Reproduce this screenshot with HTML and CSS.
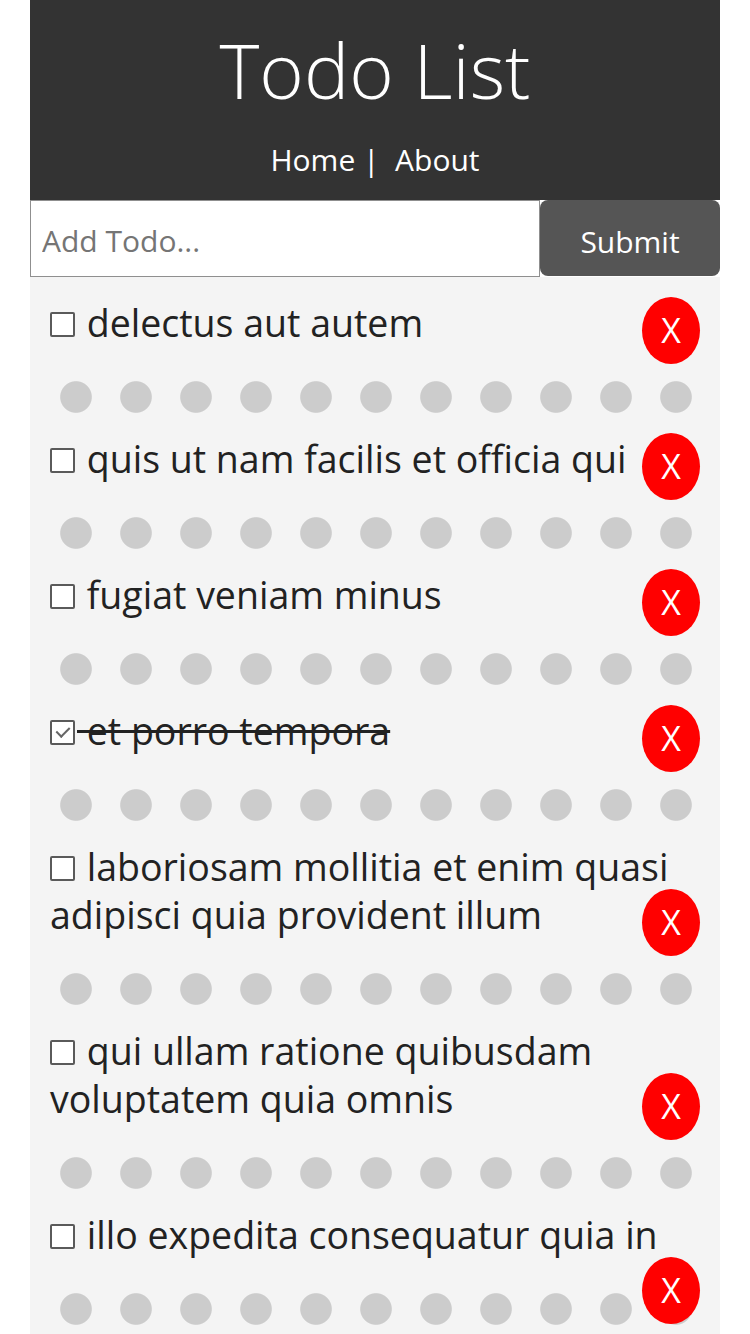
FILE: index.html
```html
<!DOCTYPE html>
<html lang="en">
<head>
<meta charset="utf-8">
<title>Todo List</title>
<link rel="stylesheet" href="styles.css">
</head>
<body>
<div class="app">
  <header class="header">
    <h1 class="title">Todo List</h1>
    <nav class="nav"><a class="nav-link" href="#">Home</a> |&nbsp; <a class="nav-link" href="#">About</a></nav>
  </header>
  <form class="add-form">
    <input class="add-input" type="text" placeholder="Add Todo...">
    <button class="btn" type="button">Submit</button>
  </form>
  <div class="todos">
    <div class="todo"><p class="todo-line"><input class="check" type="checkbox"> delectus aut autem<button class="del" type="button">X</button></p></div>
    <div class="todo"><p class="todo-line"><input class="check" type="checkbox"> quis ut nam facilis et officia qui<button class="del" type="button">X</button></p></div>
    <div class="todo"><p class="todo-line"><input class="check" type="checkbox"> fugiat veniam minus<button class="del" type="button">X</button></p></div>
    <div class="todo done"><p class="todo-line"><input class="check" type="checkbox" checked> et porro tempora<button class="del" type="button">X</button></p></div>
    <div class="todo"><p class="todo-line"><input class="check" type="checkbox"> laboriosam mollitia et enim quasi adipisci quia provident illum<button class="del" type="button">X</button></p></div>
    <div class="todo"><p class="todo-line"><input class="check" type="checkbox"> qui ullam ratione quibusdam voluptatem quia omnis<button class="del" type="button">X</button></p></div>
    <div class="todo"><p class="todo-line"><input class="check" type="checkbox"> illo expedita consequatur quia in<button class="del" type="button">X</button></p></div>
    <div class="todo"><p class="todo-line"><input class="check" type="checkbox"> molestiae perspiciatis ipsa<button class="del" type="button">X</button></p></div>
  </div>
</div>
</body>
</html>
```
FILE: styles.css
```css
* { box-sizing: border-box; }
html, body { margin: 0; padding: 0; background: #fff; }
body {
  font-family: "Open Sans", "Noto Sans", sans-serif;
  color: #222;
}
.app {
  margin: 0 30px;
}
.header {
  background: #333;
  color: #fff;
  text-align: center;
  padding: 25px 10px 20px;
}
.title {
  margin: 0;
  font-size: 76px;
  line-height: 90px;
  font-weight: 300;
}
.nav {
  margin-top: 25px;
  font-size: 30px;
  line-height: 40px;
}
.nav-link {
  color: #fff;
  text-decoration: none;
}
.add-form {
  display: flex;
  height: 77px;
}
.add-input {
  flex: 1;
  margin: 0;
  border: 1px solid #8f8f8f;
  padding: 4px 11px 0;
  font-family: inherit;
  font-size: 30px;
  color: #222;
  background: #fff;
  outline: none;
}
.add-input::placeholder { color: #757575; }
.btn {
  width: 180px;
  margin: 0 0 1px;
  border: none;
  border-radius: 8px;
  background: #555;
  color: #fff;
  font-family: inherit;
  font-size: 30px;
  padding: 6px 0 0;
}
.todo {
  background: #f4f4f4;
  padding: 22px 20px 0;
  font-size: 37.5px;
  line-height: 48px;
}
.todo::after {
  content: "";
  display: block;
  height: 32px;
  margin: 34px 8px 0 10px;
  background-image: radial-gradient(circle at 16px 16px, #ccc 15.3px, rgba(204,204,204,0) 16.3px);
  background-size: 60px 32px;
  background-repeat: repeat-x;
}
.todo-line { margin: 0; }
.done { text-decoration: line-through; }
.check {
  -webkit-appearance: none;
  appearance: none;
  display: inline-block;
  width: 25px;
  height: 25px;
  margin: 0 2px 0 0;
  vertical-align: baseline;
  border: 2px solid #5a5a5a;
  border-radius: 2px;
  background: #fff;
  position: relative;
}
.check:checked::after {
  content: "";
  position: absolute;
  left: 7px;
  top: 2px;
  width: 6px;
  height: 11px;
  border: solid #666;
  border-width: 0 2px 2px 0;
  transform: rotate(45deg);
}
.del {
  float: right;
  width: 58px;
  height: 67px;
  padding: 0;
  margin: -2px 0 0;
  border: none;
  border-radius: 50%;
  background: #ff0000;
  color: #fff;
  font-family: inherit;
  font-size: 34px;
  line-height: 67px;
  text-align: center;
}
```
